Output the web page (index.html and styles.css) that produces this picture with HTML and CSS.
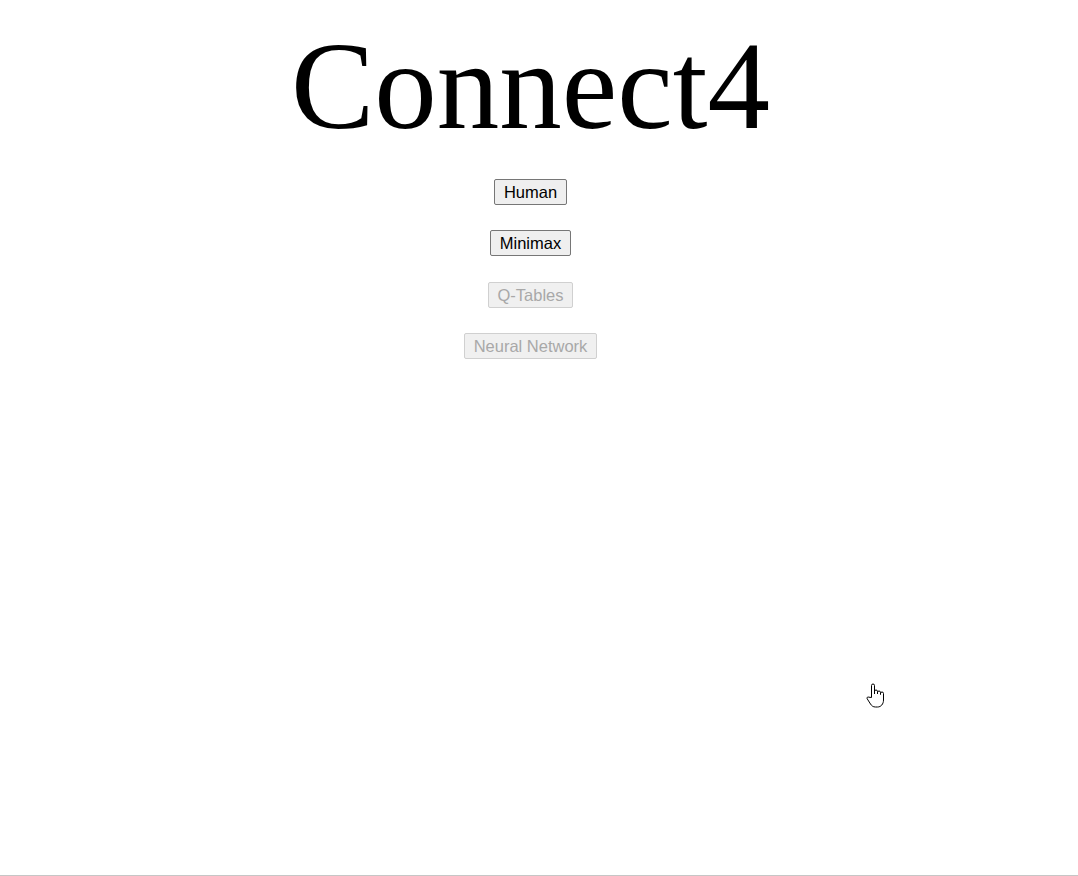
FILE: index.html
```html
<!DOCTYPE html>
<html>
<head>
<meta charset="utf-8">
<title>Connect4</title>
<link rel="stylesheet" href="styles.css">
</head>
<body>
<div class="page">
  <h1 class="title">Connect4</h1>
  <div class="menu">
    <button class="btn">Human</button>
    <button class="btn">Minimax</button>
    <button class="btn" disabled>Q-Tables</button>
    <button class="btn" disabled>Neural Network</button>
  </div>
  <svg class="cursor" width="20" height="26" viewBox="0 0 20 26" aria-hidden="true">
    <path d="M5.5 14.5 V2.5 a1.5 1.5 0 0 1 3 0 V11 V8.5 a1.5 1.5 0 0 1 3 0 V11 V9.5 a1.5 1.5 0 0 1 3 0 V11.5 V10.5 a1.5 1.5 0 0 1 3 0 V17 c0 4 -2.5 7 -6 7 h-2 c-2.5 0 -3.8 -1.2 -5 -3 L1.2 15.8 c-0.8 -1.2 0.6 -2.4 1.7 -1.6 Z" fill="#fff" stroke="#000" stroke-width="1" stroke-linejoin="round"/>
  </svg>
</div>
</body>
</html>
```
FILE: styles.css
```css
html, body {
  margin: 0;
  padding: 0;
  background: #fff;
}
.page {
  position: relative;
  width: 1078px;
  height: 876px;
  padding-right: 17px;
  box-sizing: border-box;
  border-bottom: 1px solid #c6c6c6;
  display: flex;
  flex-direction: column;
  align-items: center;
}
.title {
  margin: 24px 0 0 0;
  font-family: "Liberation Serif", "Times New Roman", serif;
  font-weight: normal;
  font-size: 125px;
  line-height: 125px;
  color: #000;
}
.menu {
  margin-top: 30px;
  display: flex;
  flex-direction: column;
  align-items: center;
  gap: 25.4px;
}
.btn {
  font-family: "Liberation Sans", Arial, sans-serif;
  font-size: 16.5px;
  line-height: 18px;
  padding: 3px 8.5px;
  height: 26px;
  box-sizing: border-box;
  color: #000;
  background: #efefef;
  border: 1px solid #767676;
  border-radius: 2px;
}
.btn:disabled {
  color: #a8a8a8;
  background: #f0f0f0;
  border-color: #d0d0d0;
}
.cursor {
  position: absolute;
  left: 866px;
  top: 683px;
}
```
